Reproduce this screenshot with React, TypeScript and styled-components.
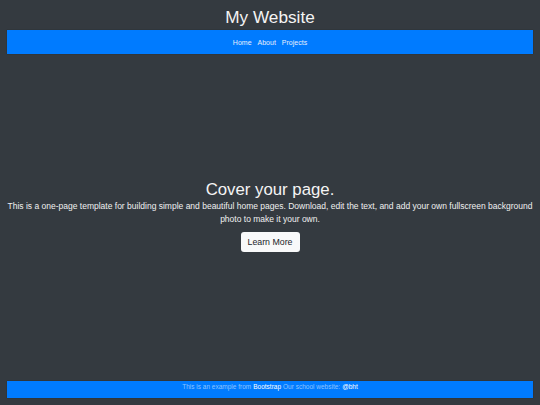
import React from "react";
import styled, { createGlobalStyle } from "styled-components";

const Global = createGlobalStyle`
  html, body { margin: 0; padding: 0; background: #343a40; }
  body { font-family: "Liberation Sans", Arial, sans-serif; color: #fff; }
  * { box-sizing: border-box; }
`;

const Page = styled.div`
  height: 405px;
  display: flex;
  flex-direction: column;
  padding: 0 7px 7px;
`;

const Title = styled.h1`
  margin: 0;
  height: 30px;
  font-size: 17.2px;
  font-weight: 400;
  line-height: 34px;
  text-align: center;
  color: #f4f4f4;
`;

const Nav = styled.nav`
  height: 24px;
  background: #007bff;
  display: flex;
  justify-content: center;
  align-items: center;
  gap: 6px;
  box-shadow: 0 0 1px rgba(0, 0, 0, 0.4);
`;

const NavLink = styled.a`
  font-size: 7px;
  color: #e8eefc;
  text-decoration: none;
`;

const Main = styled.main`
  flex: 1;
  display: flex;
  flex-direction: column;
  align-items: center;
  justify-content: center;
  text-align: center;
  padding-bottom: 3px;
`;

const Heading = styled.h2`
  margin: 0;
  font-size: 16.8px;
  font-weight: 400;
  line-height: 19px;
  color: #f4f4f4;
`;

const Lead = styled.p`
  margin: 1px 0 0;
  font-size: 8.5px;
  line-height: 13px;
  color: #f0f0f0;
`;

const Button = styled.a`
  margin-top: 6px;
  display: inline-block;
  background: #f8f9fa;
  color: #212529;
  font-size: 8.8px;
  border-radius: 3px;
  padding: 0 7px;
  height: 20px;
  line-height: 20px;
  text-decoration: none;
`;

const Footer = styled.footer`
  height: 17px;
  background: #007bff;
  display: flex;
  justify-content: center;
  align-items: flex-start;
  padding-top: 2px;
  font-size: 6.5px;
  color: rgba(255, 255, 255, 0.55);
  gap: 2px;
  box-shadow: 0 0 1px rgba(0, 0, 0, 0.4);
`;

const FootLink = styled.a`
  color: #fff;
  text-decoration: none;
`;

export default function App() {
  return (
    <>
      <Global />
      <Page>
        <Title>My Website</Title>
        <Nav>
          <NavLink href="#">Home</NavLink>
          <NavLink href="#">About</NavLink>
          <NavLink href="#">Projects</NavLink>
        </Nav>
        <Main>
          <Heading>Cover your page.</Heading>
          <Lead>
            This is a one-page template for building simple and beautiful home pages. Download, edit the text, and add your own fullscreen background photo to make it your own.
          </Lead>
          <Button href="#">Learn More</Button>
        </Main>
        <Footer>
          <span>This is an example from</span>
          <FootLink href="#">Bootstrap</FootLink>
          <span>Our school website:</span>
          <FootLink href="#">@bht</FootLink>
        </Footer>
      </Page>
    </>
  );
}
